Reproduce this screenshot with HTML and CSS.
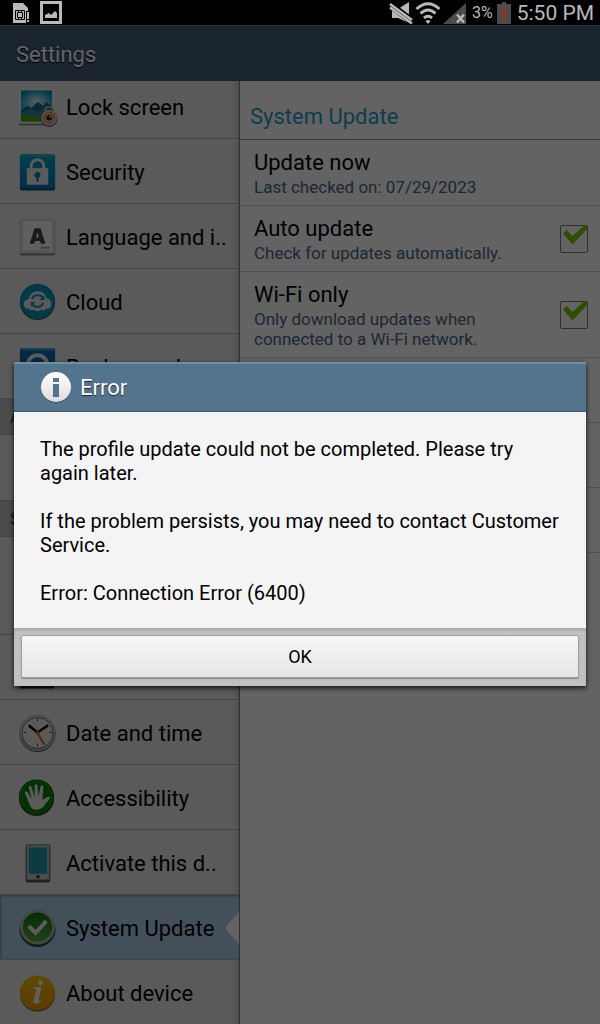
FILE: index.html
```html
<!DOCTYPE html>
<html lang="en">
<head>
    <meta charset="UTF-8" />
    <meta name="viewport" content="width=device-width, initial-scale=1" />
    <title>Settings</title>
    <link rel="stylesheet" href="styles.css">
</head>
<body>
    <div class="statusbar">
        <div class="status-left">
            <svg width="18" height="22" viewBox="0 0 18 22">
                <path fill="#b9b9b9" d="M1 1h10l5 5v3h-2v12h-13z" />
                <path fill="none" stroke="#000" d="M3.500 8.500h9v9h-9z" />
                <path fill="none" stroke="#000" d="M5.500 10.500h5v5h-5zM6.500 8v2M9.500 8v2M6.500 16v2M9.500 16v2" />
                <path fill="#b9b9b9" d="M15 10h2v7h-2zM15 18h2v2h-2z" />
            </svg>
            <svg width="22" height="23" viewBox="0 0 22 23">
                <path fill="none" stroke="#b9b9b9" stroke-width="3" d="M1.500 1.500h19v20h-19z" />
                <path fill="#b9b9b9" d="M5 17v-3l4-2 2 2 4-4 2 2v5z" />
            </svg>
        </div>
        <div class="status-right">
            <svg width="24" height="22" viewBox="0 0 24 22">
                <path fill="#b9b9b9" d="M3 7h6l11-7v21L9 16H3z" />
                <path stroke="#000" stroke-width="7" d="M-1 1l25 19" />
                <path stroke="#b9b9b9" stroke-width="2.500" d="M1 2l22 16M1 5.500l22 16" />
            </svg>
            <svg width="26" height="22" viewBox="0 0 26 22">
                <g fill="none" stroke="#b9b9b9" stroke-width="3">
                    <path d="M1.500 7q11.500-10.500 23 0" />
                    <path d="M5.500 11.500q7.500-7 15 0" />
                    <path d="M9 16q4-3.500 8 0" />
                </g>
                <path fill="#b9b9b9" d="M10.500 19q2.500-2 5 0l-2.500 3z" />
            </svg>
            <svg width="23" height="22" viewBox="0 0 23 22">
                <path fill="#4b4b4b" d="M23 1v21H0z" />
                <path stroke="#b9b9b9" stroke-width="2.500" d="M14 12.500l7 8M21 12.500l-7 8" />
            </svg>
            <span class="percent">3%</span>
            <svg width="14" height="22" viewBox="0 0 14 22">
                <path fill="#4b4b4b" d="M5 0h4v2h5v20H0V2h5z" />
                <path fill="#c61f00" d="M6 6h3l-1 9h-1zM6 16h3v2H6z" />
            </svg>
            <span class="clock">5:50 PM</span>
        </div>
    </div>

    <div class="app">
        <header class="titlebar"><h1>Settings</h1></header>
        <div class="panes">
            <nav class="sidebar">
                <ul>
                    <li><a href="#lock">
                        <svg width="42" height="42" viewBox="0 0 42 42">
                            <defs>
                                <linearGradient id="sky" x2="0" y2="1"><stop stop-color="#0089b0" /><stop offset="1" stop-color="#55c8e0" /></linearGradient>
                                <radialGradient id="sun" cx=".5" cy=".45" r=".5"><stop stop-color="#fff" stop-opacity=".8" /><stop offset="1" stop-color="#fff" stop-opacity="0" /></radialGradient>
                            </defs>
                            <rect x="2" y="3" width="37" height="37" rx="2" fill="#888" />
                            <rect x="2" y="2" width="37" height="36" rx="2" fill="#eee" />
                            <rect x="4" y="4" width="32" height="32" fill="url(#sky)" />
                            <rect x="4" y="4" width="32" height="25" fill="url(#sun)" />
                            <path fill="#1e5f85" d="M4 24l7-4 4 2 6-6 6 4 3-4 6 5v11H4z" />
                            <path fill="#337da1" d="M4 27l10-5 7 4 8-6 7 7v5H4z" />
                            <path fill="#4b9e0b" d="M4 29q12 0 19 3l13 2v2H4z" />
                            <path fill="none" stroke="#aaa" stroke-width="2" d="M29 26q0-6 4-5 4 0 4 5" />
                            <circle cx="33" cy="33" r="8.500" fill="#666" />
                            <circle cx="33" cy="32" r="8" fill="#c8c8c8" />
                            <circle cx="33" cy="32" r="6" fill="#ef7d12" />
                            <circle cx="33" cy="32" r="4" fill="#f3e4d0" />
                            <circle cx="33" cy="32" r="3" fill="#142436" />
                            <circle cx="34" cy="31" r="1" fill="#fff" />
                        </svg>
                        Lock screen</a></li>
                    <li><a href="#security">
                        <svg width="42" height="42" viewBox="0 0 42 42">
                            <defs><linearGradient id="blue" x2="0" y2="1"><stop stop-color="#00a0b8" /><stop offset="1" stop-color="#0070b8" /></linearGradient></defs>
                            <rect x="3" y="3" width="36" height="37" rx="2" fill="#174b68" />
                            <rect x="3" y="3" width="36" height="35" rx="2" fill="url(#blue)" />
                            <path fill="none" stroke="#3cc1d9" d="M4 4.500h34" />
                            <path fill="none" stroke="#e1e1e1" stroke-width="3" d="M14.500 18v-3a6.500 6.500 0 0 1 13 0v3" />
                            <path fill="#e1e1e1" d="M10 17h22v17H10z" />
                            <circle cx="21" cy="24" r="3" fill="#007eb8" />
                            <path fill="#007eb8" d="M20 25h2v6h-2z" />
                        </svg>
                        Security</a></li>
                    <li><a href="#language">
                        <svg width="42" height="42" viewBox="0 0 42 42">
                            <rect x="3" y="4" width="36" height="36" rx="1" fill="#888" />
                            <rect x="3.500" y="3.500" width="35" height="34" rx="1" fill="#ededed" stroke="#b5b5b5" />
                            <path fill="none" stroke="#bababa" d="M5.500 4v31.500h31V4" />
                            <path fill="#424242" fill-rule="evenodd" d="M18 12h6l5 16h-4.500l-1-3h-5l-1 3H13zM19.500 21.500h3L21 16z" />
                            <path stroke="#777" stroke-width="2" stroke-dasharray="2 1" d="M25 32h8" />
                        </svg>
                        Language and i..</a></li>
                    <li><a href="#cloud">
                        <svg width="42" height="42" viewBox="0 0 42 42">
                            <circle cx="21" cy="21.500" r="18" fill="#45555f" />
                            <circle cx="21" cy="20.500" r="18" fill="#087ba0" />
                            <circle cx="21" cy="20.500" r="17" fill="#0b8eb5" />
                            <path fill="#e1e1e1" d="M12 28q-5 0-5-5 0-4 5-5 2-8 9-8 8 0 9 7 5 1 5 6 0 5-5 5-2 2-5 1-4 3-8 0-3 1-5-1z" />
                            <path fill="none" stroke="#0b8eb5" stroke-width="2" d="M15 18q2-4 6-4 4 0 6 3M27 22q-2 4-6 4-4 0-6-3" />
                            <path fill="#0b8eb5" d="M28 14v5h-5zM14 26v-5h5z" />
                        </svg>
                        Cloud</a></li>
                    <li><a href="#backup">
                        <svg width="42" height="42" viewBox="0 0 42 42">
                            <rect x="3" y="2" width="36" height="36" rx="1" fill="#0068aa" />
                            <path stroke="#40a5df" d="M4 3.500h34" />
                            <circle cx="21" cy="19" r="10" fill="none" stroke="#e1e1e1" stroke-width="4" />
                        </svg>
                        Backup and r..</a></li>
                    <li class="category">ACCOUNTS</li>
                    <li class="blank"></li>
                    <li class="category">SYSTEM</li>
                    <li class="blank tall"></li>
                    <li><a href="#accessory" aria-label="Accessory">
                        <svg width="42" height="42" viewBox="0 0 42 42"><path fill="#333" d="M3 4h35v38H3z" /></svg>
                    </a></li>
                    <li><a href="#date">
                        <svg width="42" height="42" viewBox="0 0 42 42">
                            <circle cx="21" cy="22" r="18.500" fill="#555" />
                            <circle cx="21" cy="21" r="18.500" fill="#aaa" />
                            <circle cx="21" cy="20.500" r="17" fill="#ddd" />
                            <circle cx="21" cy="21" r="16" fill="#e3e0d8" stroke="#555" />
                            <path stroke="#444" d="M21 6v3M21 32v3M7 20.500h3M33 20.500h3" />
                            <path stroke="#000" stroke-width="2.500" d="M12 13l9 7.500 11-7.500" fill="none" />
                            <path stroke="#c85a0a" stroke-width="2" d="M20 19l8 14" />
                            <circle cx="21" cy="20.500" r="2" fill="#c85a0a" />
                        </svg>
                        Date and time</a></li>
                    <li><a href="#accessibility">
                        <svg width="42" height="42" viewBox="0 0 42 42">
                            <circle cx="20" cy="21.500" r="18" fill="#444" />
                            <circle cx="20" cy="20" r="18" fill="#005c05" />
                            <circle cx="20" cy="20" r="16.500" fill="#007a08" stroke="#15991c" />
                            <path fill="#e1e1e1" d="M13 28l-5-12q0-3 3-1l4 7-3-12q1-3 3 0l3 10V8q2-2 3 0l1 12 2-11q2-2 3 0l-1 14 5-3q3-1 3 1l-7 9q-3 3-8 3-4 0-6-5z" />
                        </svg>
                        Accessibility</a></li>
                    <li><a href="#activate">
                        <svg width="42" height="42" viewBox="0 0 42 42">
                            <rect x="9" y="3" width="25" height="38" rx="2" fill="#555" />
                            <rect x="9.500" y="2.500" width="24" height="36" rx="1" fill="#bdbdbd" stroke="#555" />
                            <rect x="12" y="5" width="19" height="27" fill="#2093aa" />
                            <circle cx="21.500" cy="35" r="1.700" fill="#222" />
                        </svg>
                        Activate this d..</a></li>
                    <li><a href="#update" class="selected">
                        <svg width="42" height="42" viewBox="0 0 42 42">
                            <defs><linearGradient id="green" x2="0" y2="1"><stop stop-color="#087017" /><stop offset="1" stop-color="#57a43b" /></linearGradient></defs>
                            <circle cx="21" cy="22" r="18.500" fill="#333d44" />
                            <circle cx="21" cy="20" r="18" fill="#b0b0b0" />
                            <circle cx="21" cy="20" r="15" fill="url(#green)" />
                            <path fill="none" stroke="#e8e8e8" stroke-width="4" d="M12 19l7 7 11-12" />
                        </svg>
                        System Update</a></li>
                    <li><a href="#about">
                        <svg width="42" height="42" viewBox="0 0 42 42">
                            <defs><linearGradient id="gold" x2="0" y2="1"><stop stop-color="#e5bd00" /><stop offset="1" stop-color="#e98f00" /></linearGradient></defs>
                            <circle cx="21" cy="22" r="18" fill="#555" />
                            <circle cx="21" cy="21" r="18" fill="url(#gold)" />
                            <circle cx="24" cy="10.500" r="2.500" fill="#eee" />
                            <path fill="#eee" d="M17 15h8l-3 14q1 0 3-1-2 4-6 4-3 0-2-4l3-11h-3z" />
                        </svg>
                        About device</a></li>
                </ul>
            </nav>

            <main class="content">
                <h2>System Update</h2>
                <div class="row">
                    <div class="text">
                        <h3>Update now</h3>
                        <p>Last checked on: 07/29/2023</p>
                    </div>
                </div>
                <label class="row" for="auto">
                    <span class="text">
                        <span class="name">Auto update</span>
                        <span class="desc">Check for updates automatically.</span>
                    </span>
                    <input type="checkbox" id="auto" checked>
                </label>
                <label class="row" for="wifi">
                    <span class="text">
                        <span class="name">Wi-Fi only</span>
                        <span class="desc">Only download updates when connected to a Wi-Fi network.</span>
                    </span>
                    <input type="checkbox" id="wifi" checked>
                </label>
                <div class="row"></div>
                <div class="row"></div>
                <div class="row"></div>
            </main>
        </div>

        <div class="backdrop">
            <div class="dialog" role="dialog" aria-labelledby="dialog-title">
                <div class="dialog-title">
                    <svg width="32" height="32" viewBox="0 0 32 32">
                        <defs><linearGradient id="white" x2="0" y2="1"><stop stop-color="#fff" /><stop offset="1" stop-color="#ddd" /></linearGradient></defs>
                        <circle cx="16" cy="16" r="15" fill="#3f566a" />
                        <circle cx="16" cy="15" r="15" fill="url(#white)" />
                        <path fill="#54738c" d="M13 6h6v4h-6zM13 12h6v13h-6z" />
                    </svg>
                    <h2 id="dialog-title">Error</h2>
                </div>
                <div class="dialog-body">
                    <p>The profile update could not be completed. Please try again later.</p>
                    <p>If the problem persists, you may need to contact Customer Service.</p>
                    <p>Error: Connection Error (6400)</p>
                </div>
                <div class="dialog-buttons">
                    <button type="button">OK</button>
                </div>
            </div>
        </div>
    </div>
</body>
</html>
```

FILE: styles.css
```css
* {
    box-sizing: border-box;
    margin: 0;
    padding: 0;
}
body {
    font-family: Roboto, sans-serif;
    font-size: 22px;
    height: 100vh;
    display: flex;
    flex-direction: column;
    background: #000;
    color: #000;
    overflow: hidden;
}
h1, h2, h3 {
    font-size: 22px;
    font-weight: 400;
}
svg {
    display: block;
    flex: none;
}

/* status bar */
.statusbar {
    flex: none;
    height: 25px;
    display: flex;
    justify-content: space-between;
    padding: 0 6px 0 12px;
    color: #b9b9b9;
}
.status-left, .status-right {
    display: flex;
    align-items: center;
}
.status-left {
    gap: 10px;
}
.status-right {
    gap: 2px;
}
.percent {
    font-size: 16px;
    margin: 0 2px 0 4px;
}
.clock {
    font-size: 21px;
    margin-left: 4px;
}

/* settings app */
.app {
    position: relative;
    flex: 1;
    min-height: 0;
    display: flex;
    flex-direction: column;
}
.titlebar {
    flex: none;
    height: 56px;
    display: flex;
    align-items: center;
    padding: 2px 16px 0;
    background: #415a73;
    border-top: 1px solid #5f7c91;
    color: #fafafa;
    text-shadow: 0 1px 1px #000;
}
.panes {
    flex: 1;
    min-height: 0;
    display: flex;
}
.sidebar {
    width: 40%;
    overflow: hidden;
    background: #e1e1e1;
    border-right: 1px solid #777;
    box-shadow: inset -6px 0 6px -5px #aaa;
}
.sidebar ul {
    list-style: none;
    margin-top: -7px;
}
.sidebar li {
    height: 65px;
    border-bottom: 1px solid #aaa;
}
.sidebar a {
    position: relative;
    height: 100%;
    display: flex;
    align-items: center;
    gap: 8px;
    padding: 2px 0 0 17px;
    color: #000;
    text-decoration: none;
    white-space: nowrap;
}
.sidebar svg {
    width: 41px;
}
.sidebar .selected {
    background: #a8c8e1;
    box-shadow: inset 1px 1px 3px #6e8ba0;
}
.sidebar .selected::after {
    content: '';
    position: absolute;
    right: 0;
    top: 17px;
    width: 14px;
    height: 32px;
    background: #f7f7f7;
    clip-path: polygon(100% 0, 0 50%, 100% 100%);
}
.sidebar .category {
    height: 36px;
    padding: 6px 10px;
    font-size: 18px;
    line-height: 24px;
    background: #bcbcbc;
    color: #333;
}
.sidebar .blank {
    height: 66px;
}
.sidebar .tall {
    height: 98px;
}

.content {
    flex: 1;
    min-width: 0;
    background: #f7f7f7;
    overflow: hidden;
}
.content > h2 {
    padding: 23px 10px 9px;
    line-height: 26px;
    border-bottom: 1px solid #999;
    color: #2498c4;
}
.row {
    display: flex;
    align-items: center;
    gap: 20px;
    min-height: 65px;
    padding: 8px 12px 8px 14px;
    border-bottom: 1px solid #ccc;
}
.text {
    flex: 1;
    min-width: 0;
}
.row h3, .name {
    display: block;
    font-size: 22px;
    line-height: 29px;
}
.row p, .desc {
    display: block;
    font-size: 17px;
    line-height: 20px;
    color: #46647f;
}
input[type="checkbox"] {
    appearance: none;
    position: relative;
    width: 28px;
    height: 28px;
    border: 1px solid #777;
    border-radius: 2px;
    background: #f7f7f7;
}
input[type="checkbox"]:checked::after {
    content: '';
    position: absolute;
    left: 2px;
    top: -1px;
    width: 26px;
    height: 20px;
    background: #78c000;
    clip-path: polygon(0 45%, 14% 28%, 36% 58%, 86% 0, 100% 14%, 36% 100%);
}

/* error dialog */
.backdrop {
    position: absolute;
    inset: 0;
    display: flex;
    align-items: center;
    padding: 0 14px 1px;
    background: rgba(0, 0, 0, 0.6);
}
.dialog {
    width: 100%;
    border-radius: 2px;
    overflow: hidden;
    background: #f4f4f4;
    box-shadow: 0 2px 5px rgba(0, 0, 0, 0.8);
}
.dialog-title {
    height: 50px;
    display: flex;
    align-items: center;
    gap: 8px;
    padding: 0 26px;
    background: #54738c;
    border-top: 2px solid #6e8fa6;
    border-bottom: 1px solid #3f566e;
    color: #fff;
    text-shadow: 0 1px 1px #222;
}
.dialog-body {
    display: flex;
    flex-direction: column;
    gap: 24px;
    padding: 25px 26px 23px;
    font-size: 20px;
    line-height: 24px;
}
.dialog-buttons {
    padding: 6px 7px 8px;
    background: #c1c1c1;
    border-top: 1px solid #aaa;
    box-shadow: inset 0 2px 2px #b0b0b0;
}
.dialog-buttons button {
    display: block;
    width: 100%;
    height: 43px;
    border: 1px solid #a0a0a0;
    border-radius: 2px;
    background: linear-gradient(#f6f6f6, #e6e6e6);
    box-shadow: 0 1px 1px #888;
    font-family: inherit;
    font-size: 18px;
    color: #000;
}
```
